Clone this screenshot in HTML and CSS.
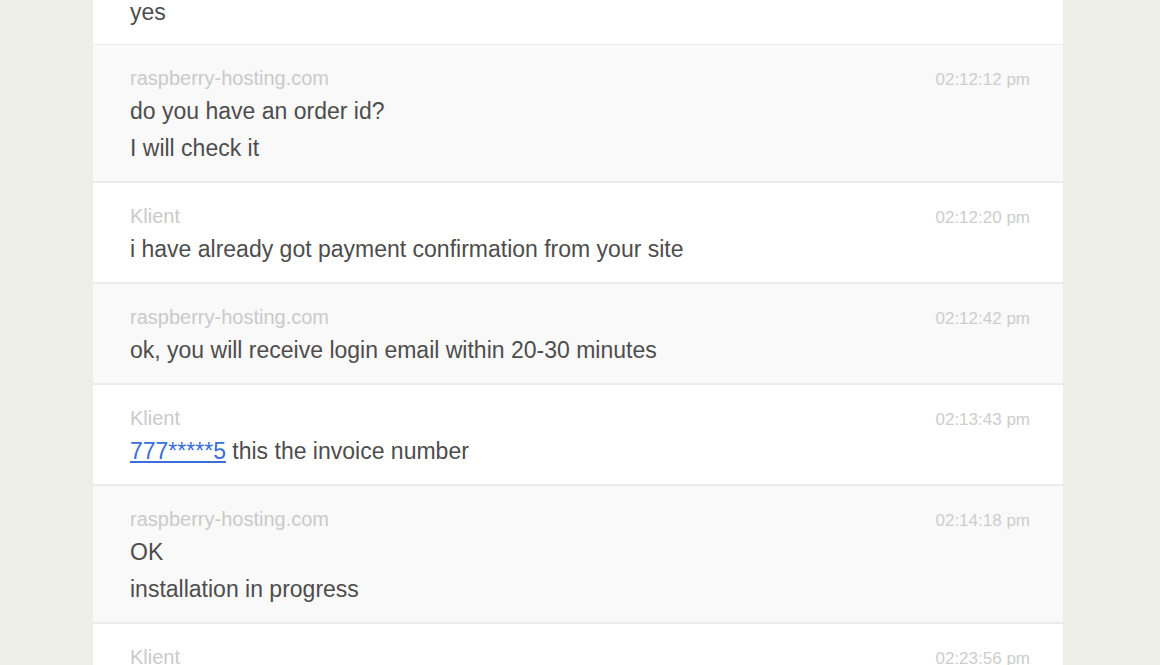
FILE: index.html
```html
<!DOCTYPE html>
<html>
<head>
<meta charset="utf-8">
<link rel="stylesheet" href="styles.css">
</head>
<body>
<div class="panel">
  <div class="row white partial">
    <div class="msg">yes</div>
  </div>
  <div class="row gray">
    <div class="head"><span class="name">raspberry-hosting.com</span><span class="time">02:12:12 pm</span></div>
    <div class="msg">do you have an order id?</div>
    <div class="msg">I will check it</div>
  </div>
  <div class="row white">
    <div class="head"><span class="name">Klient</span><span class="time">02:12:20 pm</span></div>
    <div class="msg">i have already got payment confirmation from your site</div>
  </div>
  <div class="row gray">
    <div class="head"><span class="name">raspberry-hosting.com</span><span class="time">02:12:42 pm</span></div>
    <div class="msg">ok, you will receive login email within 20-30 minutes</div>
  </div>
  <div class="row white">
    <div class="head"><span class="name">Klient</span><span class="time">02:13:43 pm</span></div>
    <div class="msg"><a class="link" href="#">777*****5</a> this the invoice number</div>
  </div>
  <div class="row gray">
    <div class="head"><span class="name">raspberry-hosting.com</span><span class="time">02:14:18 pm</span></div>
    <div class="msg">OK</div>
    <div class="msg">installation in progress</div>
  </div>
  <div class="row white">
    <div class="head"><span class="name">Klient</span><span class="time">02:23:56 pm</span></div>
  </div>
</div>
</body>
</html>
```
FILE: styles.css
```css
html, body {
  margin: 0;
  padding: 0;
  height: 100%;
  overflow: hidden;
  background: #eeeee9;
  font-family: "Liberation Sans", Arial, sans-serif;
}
.panel {
  width: 970px;
  margin: 0 0 0 93px;
  background: #ffffff;
  min-height: 700px;
}
.row {
  padding: 21px 33px 14px 37px;
  border-bottom: 2px solid #ebebeb;
}
.row.white { background: #ffffff; }
.row.gray { background: #f9f9f9; }
.row.partial {
  padding-top: 0;
  padding-bottom: 13px;
  margin-top: -6px;
  border-bottom-width: 1px;
}
.head {
  display: flex;
  justify-content: space-between;
  align-items: baseline;
  height: 24px;
  line-height: 24px;
  margin-bottom: 3px;
}
.name {
  font-size: 20px;
  color: #cacaca;
}
.time {
  font-size: 17px;
  color: #cdcdcd;
}
.msg {
  font-size: 23px;
  line-height: 37px;
  color: #4d4d4d;
}
.link {
  color: #3a6fd8;
  text-decoration: underline;
}
```
